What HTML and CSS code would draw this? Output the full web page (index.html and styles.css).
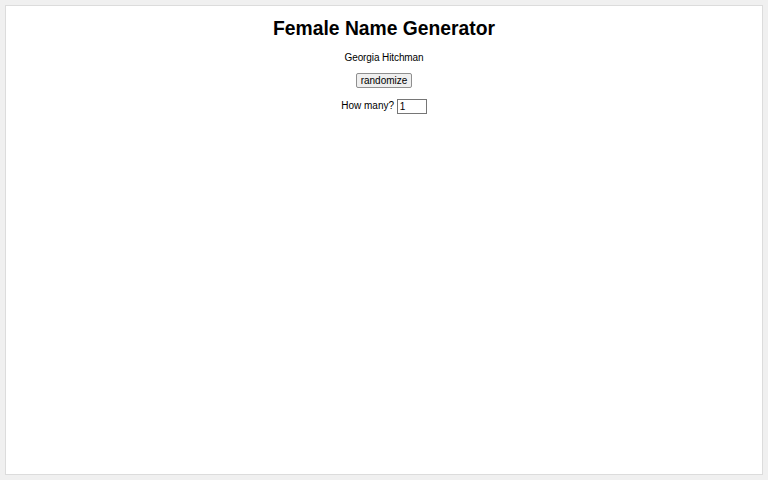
FILE: index.html
```html
<!DOCTYPE html>
<html>
<head>
<meta charset="utf-8">
<link rel="stylesheet" href="styles.css">
</head>
<body>
<div class="panel">
  <h1 class="title">Female Name Generator</h1>
  <p class="name">Georgia Hitchman</p>
  <p class="row row-btn"><button class="btn">randomize</button></p>
  <p class="row">How many? <input class="count" type="text" value="1"></p>
</div>
</body>
</html>
```
FILE: styles.css
```css
html, body { margin: 0; padding: 0; }
body {
  background: #f0f0f0;
  font-family: "Liberation Sans", Arial, sans-serif;
  padding: 5px;
  box-sizing: border-box;
  height: 480px;
}
.panel {
  background: #fff;
  border: 1px solid #dcdcdc;
  height: 470px;
  box-sizing: border-box;
  text-align: center;
  padding-top: 14px;
}
.title {
  font-size: 19.3px;
  font-weight: bold;
  margin: 0 0 13px;
  line-height: 18px;
  color: #000;
}
.name {
  font-size: 10px;
  margin: 0 0 8px;
  line-height: 14px;
  letter-spacing: -0.1px;
}
.row {
  font-size: 10px;
  margin: 0 0 10px;
}
.row-btn { margin-bottom: 11px; }
.btn {
  font-family: "Liberation Sans", Arial, sans-serif;
  font-size: 10px;
  padding: 1px 4px;
  height: 15px;
  line-height: 11px;
  border: 1px solid #8f8f8f;
  border-radius: 2px;
  background: #efefef;
  color: #000;
}
.count {
  font-family: "Liberation Sans", Arial, sans-serif;
  font-size: 10px;
  width: 30px;
  height: 15px;
  box-sizing: border-box;
  padding: 0 2px;
  border: 1px solid #767676;
  vertical-align: middle;
}
```
